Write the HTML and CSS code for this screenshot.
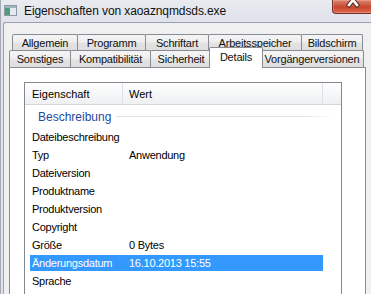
FILE: index.html
```html
<!DOCTYPE html>
<html lang="de">
  <head>
    <meta charset="UTF-8" />
    <title>Eigenschaften von xaoaznqmdsds.exe</title>
    <link rel="stylesheet" href="styles.css">
  </head>
  <body>
    <div class="window">
      <div class="titlebar">
        <svg class="app-icon" width="13" height="11" viewBox="0 0 13 11">
          <rect x="0.5" y="0.5" width="12" height="10" fill="#d6dde2" stroke="#8b9aa3"/>
          <rect x="1" y="1" width="11" height="2" fill="#9fb2bd"/>
          <rect x="1" y="3" width="5" height="7" fill="#4f9b7b"/>
          <rect x="6" y="3" width="6" height="7" fill="#e4eaee"/>
        </svg>
        <span class="title">Eigenschaften von xaoaznqmdsds.exe</span>
        <div class="close-btn">
          <svg width="16" height="12" viewBox="0 0 16 12">
            <path d="M4 -5 L12 5 M12 -5 L4 5" stroke="#5a2a22" stroke-width="4.5" stroke-linecap="square"/>
            <path d="M4 -5 L12 5 M12 -5 L4 5" stroke="#ffffff" stroke-width="2.6" stroke-linecap="square"/>
          </svg>
        </div>
      </div>

      <div class="client">
        <div class="tabs">
          <div class="tabrow row-back">
            <div class="tab w-allg">Allgemein</div>
            <div class="tab w-prog">Programm</div>
            <div class="tab w-schrift">Schriftart</div>
            <div class="tab w-arbeit">Arbeitsspeicher</div>
            <div class="tab w-bild">Bildschirm</div>
          </div>
          <div class="tabrow row-front">
            <div class="tab w-sonst">Sonstiges</div>
            <div class="tab w-kompat">Kompatibilität</div>
            <div class="tab w-sicher">Sicherheit</div>
            <div class="tab tab-active w-details">Details</div>
            <div class="tab w-vorg">Vorgängerversionen</div>
          </div>
        </div>

        <div class="panel">
          <div class="list">
            <div class="list-head">
              <div class="head-col head-key">Eigenschaft</div>
              <div class="head-col head-val">Wert</div>
              <div class="head-col head-rest"></div>
            </div>

            <div class="group">
              <span class="group-name">Beschreibung</span>
              <span class="group-line"></span>
            </div>

            <div class="row"><div class="row-in"><span class="key">Dateibeschreibung</span><span class="val"></span></div></div>
            <div class="row"><div class="row-in"><span class="key">Typ</span><span class="val">Anwendung</span></div></div>
            <div class="row"><div class="row-in"><span class="key">Dateiversion</span><span class="val"></span></div></div>
            <div class="row"><div class="row-in"><span class="key">Produktname</span><span class="val"></span></div></div>
            <div class="row"><div class="row-in"><span class="key">Produktversion</span><span class="val"></span></div></div>
            <div class="row"><div class="row-in"><span class="key">Copyright</span><span class="val"></span></div></div>
            <div class="row"><div class="row-in"><span class="key">Größe</span><span class="val">0 Bytes</span></div></div>
            <div class="row row-selected"><div class="row-in"><span class="key">Änderungsdatum</span><span class="val">16.10.2013 15:55</span></div></div>
            <div class="row"><div class="row-in"><span class="key">Sprache</span><span class="val"></span></div></div>
          </div>
        </div>
      </div>
    </div>
  </body>
</html>
```

FILE: styles.css
```css
body {
  margin: 0;
  font-family: "Liberation Sans", Arial, sans-serif;
  font-size: 11px;
  color: #000;
  background-color: #dfe2ea;
}

.window {
  width: 371px;
  height: 294px;
  overflow: hidden;
  background: linear-gradient(#e9ebf1, #dfe2ea 22px);
  border-left: 1px solid #a6aab3;
  box-sizing: border-box;
  display: flex;
  flex-direction: column;
}

/* --- title bar --- */
.titlebar {
  height: 22px;
  flex: 0 0 22px;
  display: flex;
  align-items: flex-start;
}

.app-icon {
  margin: 5px 0 0 3px;
}

.title {
  margin: 4px 0 0 7px;
  font-size: 12px;
  letter-spacing: -0.1px;
  color: #111;
}

.close-btn {
  margin-left: auto;
  width: 42px;
  height: 14px;
  margin-right: -3px;
  box-sizing: border-box;
  border: 1px solid #6e3028;
  border-top: none;
  border-radius: 0 0 4px 4px;
  background: linear-gradient(#d9856f, #c9452e 55%, #dd6a4e);
  box-shadow: inset 0 0 0 1px rgba(255, 200, 180, 0.35);
  display: flex;
  justify-content: center;
}

/* --- client area --- */
.client {
  flex: 1;
  margin-left: 2px;
  background-color: #f0f0f0;
  border-top: 1px solid #9ba0a9;
  border-left: 1px solid #9ba0a9;
  border-top-left-radius: 3px;
  display: flex;
  flex-direction: column;
}

.tabs {
  padding-top: 11px;
}

.tabrow {
  display: flex;
  align-items: flex-end;
}

.row-back {
  margin-left: 8px;
  height: 16px;
}

.row-front {
  margin-left: 5px;
  height: 17px;
  position: relative;
}

.tab {
  box-sizing: border-box;
  height: 100%;
  border: 1px solid #898c95;
  border-bottom: none;
  border-radius: 2px 2px 0 0;
  background: linear-gradient(#f5f5f5, #efefef 45%, #e3e3e3 55%, #dedede);
  display: flex;
  align-items: center;
  justify-content: center;
  letter-spacing: -0.2px;
  color: #111;
  margin-left: -1px;
}

.tabrow .tab:first-child {
  margin-left: 0;
}

.tab-active {
  position: relative;
  z-index: 2;
  height: 21px;
  margin-bottom: -1px;
  margin-left: -3px;
  margin-right: -2px;
  background: #ffffff;
  align-items: flex-start;
  padding-top: 3px;
}

.w-allg { width: 66px; }
.w-prog { width: 69px; }
.w-schrift { width: 64px; }
.w-arbeit { width: 94px; }
.w-bild { width: 62px; }

.w-sonst { width: 62px; }
.w-kompat { width: 81px; }
.w-sicher { width: 62px; }
.w-details { width: 54px; }
.w-vorg { width: 104px; }

/* --- tab panel --- */
.panel {
  flex: 1;
  margin-left: 5px;
  width: 357px;
  box-sizing: border-box;
  background-color: #ffffff;
  border: 1px solid #898c95;
  border-bottom: none;
  padding: 14px 0 0 14px;
}

.list {
  width: 318px;
  height: 100%;
  box-sizing: border-box;
  border: 1px solid #828790;
  border-bottom: none;
}

.list-head {
  display: flex;
  height: 22px;
  box-sizing: border-box;
  border-bottom: 1px solid #d5d5d5;
  background: linear-gradient(#ffffff, #f6f7f8 50%, #eef0f2);
}

.head-col {
  display: flex;
  align-items: center;
  box-sizing: border-box;
}

.head-key {
  width: 98px;
  padding-left: 7px;
  border-right: 1px solid #e0e2e5;
}

.head-val {
  width: 200px;
  padding-left: 6px;
  border-right: 1px solid #e0e2e5;
}

.head-rest {
  flex: 1;
}

/* --- group header --- */
.group {
  height: 23px;
  display: flex;
  align-items: center;
  padding-left: 13px;
  padding-right: 8px;
}

.group-name {
  font-size: 12px;
  color: #1e4b9e;
}

.group-line {
  flex: 1;
  height: 1px;
  margin-left: 5px;
  background: linear-gradient(to right, #dfe3e9 85%, #ffffff);
}

/* --- property rows --- */
.row {
  height: 18px;
  box-sizing: border-box;
  padding: 1px 0;
  margin-left: 5px;
  width: 293px;
}

.row-in {
  height: 16px;
  display: flex;
  align-items: center;
  letter-spacing: -0.25px;
}

.key {
  width: 97px;
  padding-left: 2px;
}

.row-selected .row-in {
  background-color: #3399ff;
  color: #ffffff;
}
```
